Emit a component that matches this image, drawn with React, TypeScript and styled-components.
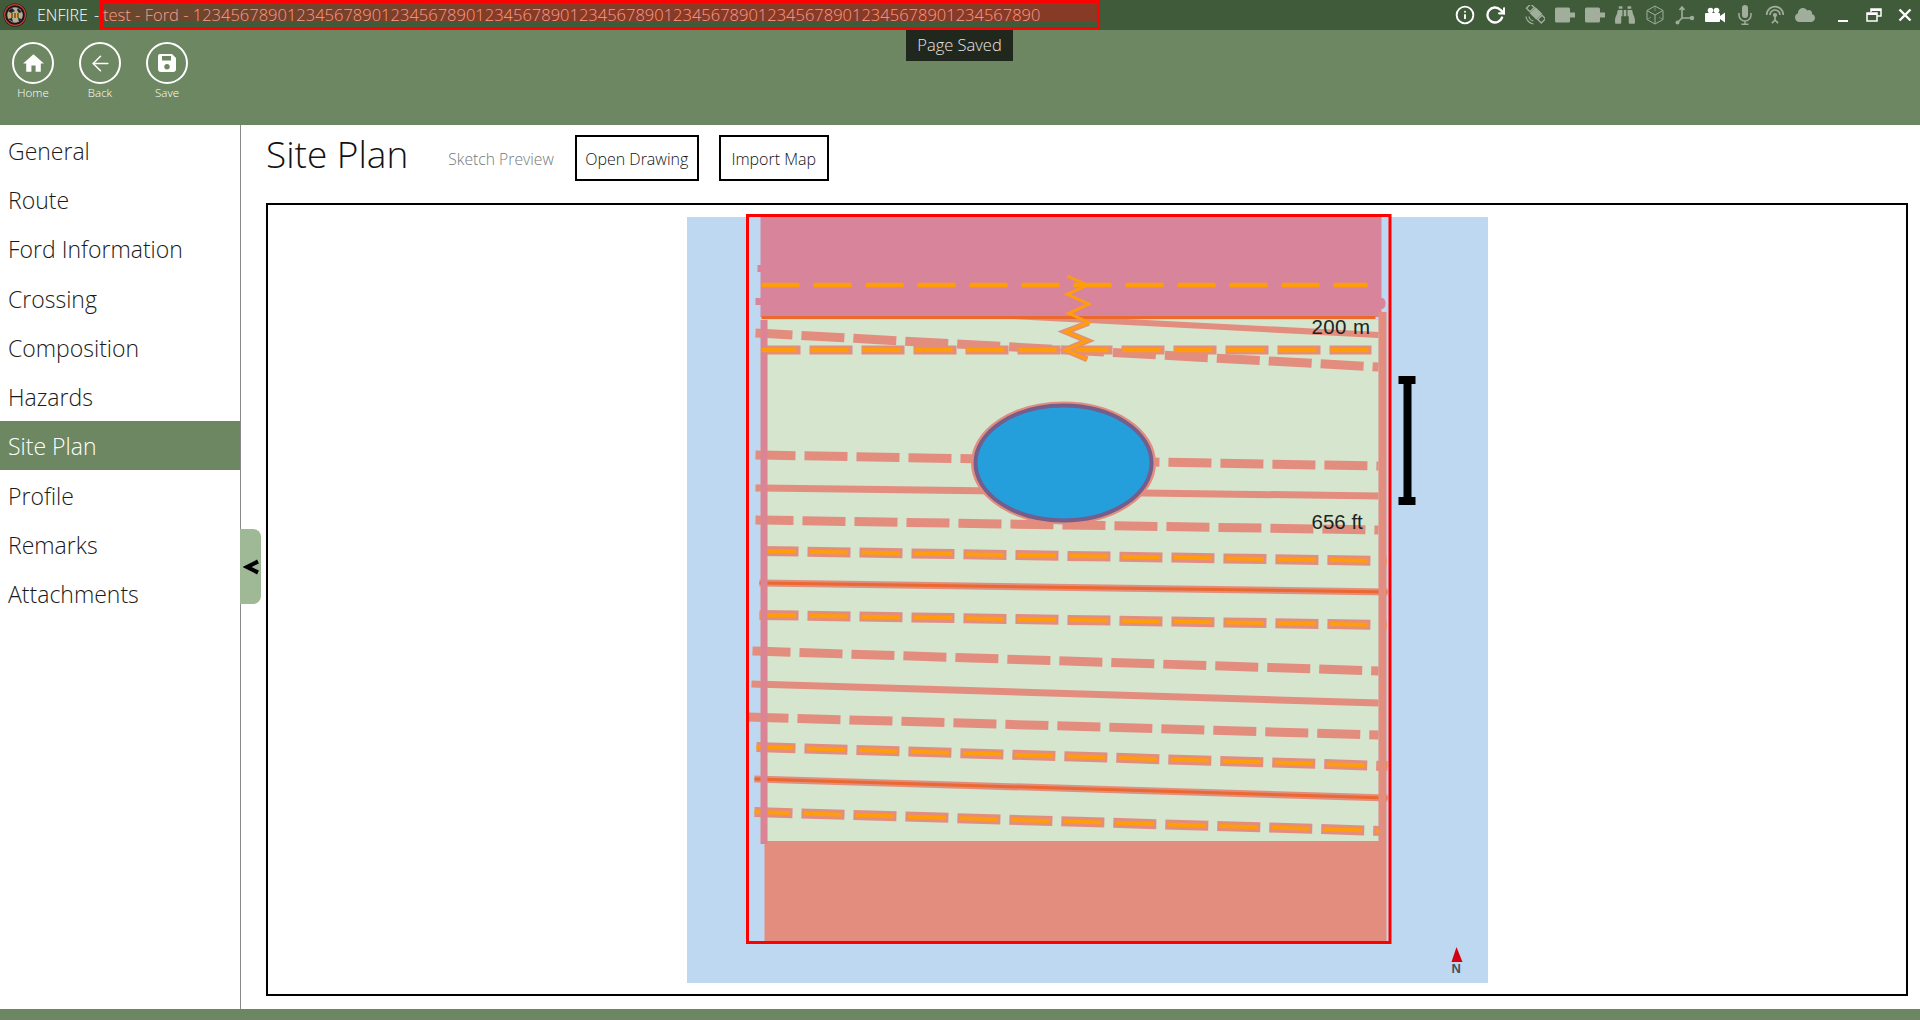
import styled, { createGlobalStyle } from "styled-components"
import { FiInfo, FiRotateCw, FiArrowLeft } from "react-icons/fi"
import { FaBinoculars, FaCloud } from "react-icons/fa"
import { MdOutlineSettingsInputAntenna, MdHome } from "react-icons/md"

const NAV = ["General", "Route", "Ford Information", "Crossing", "Composition", "Hazards", "Site Plan", "Profile", "Remarks", "Attachments"]

const GlobalStyle = createGlobalStyle`
  html, body { margin: 0; padding: 0; height: 100%; background: #fff; }
  body { font-family: "Open Sans", "Noto Sans", sans-serif; overflow: hidden; }
`

const Shell = styled.div`
  display: flex;
  flex-direction: column;
  width: 1920px;
  height: 1020px;
`

const TitleBar = styled.div`
  position: relative;
  display: flex;
  align-items: center;
  height: 30px;
  flex: none;
  background: #3f5b3a;
  color: #fff;
  font-size: 16px;
  font-weight: 300;
`

const LogoSlot = styled.span`
  display: flex;
  flex: none;
  width: 37px;
  padding-left: 3px;
  box-sizing: border-box;
`

const TitleName = styled.span`
  flex: none;
  width: 63px;
  white-space: pre;
  word-spacing: 2px;
`

const TitleDoc = styled.span`
  display: flex;
  align-items: center;
  flex: none;
  box-sizing: border-box;
  width: 1000px;
  height: 30px;
  padding-bottom: 2px;
  border: 3px solid #ff0000;
  background: linear-gradient(90deg, #65492f, #873b26 45%) top left / 100% 19px no-repeat;
  color: #ff9a8c;
  font-size: 16.5px;
  white-space: pre;
`

const IconGroup = styled.div`
  display: flex;
  align-items: center;
  margin-left: auto;
`

const Glyph = styled.span<{ $dim?: boolean; $gap?: number }>`
  display: flex;
  width: 20px;
  height: 20px;
  margin-right: ${(p) => p.$gap ?? 10}px;
  font-size: 20px;
  color: ${(p) => (p.$dim ? "#a0ae9b" : "#fff")};
`

const WinButton = styled.span`
  display: grid;
  place-items: center;
  width: 31px;
  height: 30px;
  color: #fff;
`

const Tip = styled.div`
  position: absolute;
  top: 30px;
  left: 906px;
  width: 107px;
  height: 31px;
  padding-bottom: 2px;
  box-sizing: border-box;
  display: grid;
  place-items: center;
  background: #20281e;
  color: #e6e6e6;
  font-size: 16.5px;
  font-weight: 300;
  z-index: 2;
`

const Toolbar = styled.div`
  display: flex;
  gap: 23px;
  height: 95px;
  flex: none;
  padding: 12px 0 0 11px;
  box-sizing: border-box;
  background: #6c8762;
`

const ToolButton = styled.div`
  display: flex;
  flex-direction: column;
  align-items: center;
  width: 44px;
  color: #fff;
  font-size: 11.5px;
  font-weight: 300;
`

const ToolRing = styled.div`
  display: grid;
  place-items: center;
  box-sizing: border-box;
  width: 42px;
  height: 42px;
  margin-bottom: 1px;
  border: 2.5px solid #fff;
  border-radius: 50%;
  font-size: 25px;
`

const Body = styled.div`
  display: flex;
  flex: 1;
  min-height: 0;
`

const Sidebar = styled.nav`
  position: relative;
  width: 241px;
  flex: none;
  box-sizing: border-box;
  border-right: 1px solid #8a8a8a;
`

const NavItem = styled.div<{ $active?: boolean }>`
  display: flex;
  align-items: center;
  box-sizing: border-box;
  height: 49.3px;
  padding: 2px 0 0 8px;
  font-size: 23px;
  font-weight: 300;
  color: ${(p) => (p.$active ? "#fff" : "#1a1a1a")};
  background: ${(p) => (p.$active ? "#6c8762" : "transparent")};
`

const Collapse = styled.div`
  position: absolute;
  top: 404px;
  left: 240px;
  width: 21px;
  height: 75px;
  display: grid;
  place-items: center;
  background: #9fb896;
  border-radius: 0 8px 8px 0;
  color: #000;
`

const Main = styled.main`
  flex: 1;
  min-width: 0;
  display: flex;
  flex-direction: column;
  padding: 9px 12px 13px 25px;
`

const Header = styled.div`
  display: flex;
  align-items: center;
  height: 47px;
  margin-bottom: 22px;
`

const Title = styled.h1`
  margin: 0 40px 7px 0;
  font-size: 37px;
  line-height: 1.2;
  font-weight: 300;
  color: #111;
`

const Hint = styled.span`
  margin: 2px 21px 0 0;
  font-size: 15.7px;
  font-weight: 300;
  color: #777;
`

const OutlineButton = styled.button<{ $width: number }>`
  box-sizing: border-box;
  width: ${(p) => p.$width}px;
  height: 46px;
  padding: 2px 0 0;
  margin-right: 20px;
  background: #fff;
  border: 2px solid #000;
  font-family: inherit;
  font-size: 16px;
  font-weight: 300;
  color: #111;
`

const Canvas = styled.div`
  flex: 1;
  min-height: 0;
  box-sizing: border-box;
  border: 2px solid #000;
  display: flex;
  justify-content: center;
  padding-top: 12px;
`

const Sketch = styled.svg`
  display: block;
  width: 801px;
  height: 766px;
  overflow: visible;
`

const Footer = styled.div`
  height: 11px;
  flex: none;
  background: #6c8762;
`

const SALMON = "#e38d7f"
const ORANGE = "#ff9d0a"

// phase: x where one of the salmon dashes starts, so the gaps land where the drawing has them
const Dash = ({ d, phase, ink }: { d: number[]; phase: number; ink?: boolean }) => (
  <>
    <line
      x1={d[0]} y1={d[1]} x2={d[2]} y2={d[3]}
      stroke={SALMON}
      strokeWidth={ink ? 10 : 9}
      strokeDasharray="43 9"
      strokeDashoffset={d[0] - phase}
    />
    {ink && (
      <line
        x1={d[0]} y1={d[1]} x2={d[2]} y2={d[3]}
        stroke={ORANGE}
        strokeWidth={4}
        strokeDasharray="38 14"
        strokeDashoffset={d[0] - phase - 2.5}
      />
    )}
  </>
)

const Solid = ({ d, ink }: { d: number[]; ink?: boolean }) => (
  <>
    <line x1={d[0]} y1={d[1]} x2={d[2]} y2={d[3]} stroke={SALMON} strokeWidth={7} />
    {ink && <line x1={d[0]} y1={d[1]} x2={d[2]} y2={d[3]} stroke="#e9692f" strokeWidth={3} />}
  </>
)

const ZIG = "1066.7,276 1086.7,285 1066.7,294.3 1088.3,304 1068.3,313.3 1088.3,322.7 1065,331.7 1086.7,340.7 1065,350 1086.7,359.3"
const ZIG_LOW = "1088.3,322.7 1065,331.7 1086.7,340.7 1065,350 1086.7,359.3"

const SitePlanSketch = () => (
  <Sketch viewBox="686.5 217 801 766">
    <rect x="686.5" y="217" width="801" height="766" fill="#bfd8f1" />
    <rect x="767" y="320" width="611" height="521" fill="#d5e5ce" />

    <line x1="761" y1="303" x2="1378" y2="335" stroke={SALMON} strokeWidth={6} />
    <rect x="760" y="217" width="621" height="100" fill="#d8849a" />
    <rect x="1378" y="298" width="7" height="11" rx="5" fill="#d8849a" />
    <rect x="757" y="265" width="4" height="7" fill="#d8849a" />
    <rect x="755" y="298" width="6" height="7" fill="#d8849a" />
    <rect x="764" y="841" width="622" height="100" fill={SALMON} />

    <Dash d={[755, 333, 1378, 367]} phase={749} />
    <Dash d={[761, 350, 1371, 350]} phase={757} />
    <Dash d={[755, 455, 1378, 466]} phase={752} />
    <Solid d={[755, 488, 1378, 496]} />
    <Dash d={[755, 520, 1378, 530]} phase={750} />
    <Dash d={[761, 551, 1386, 561]} phase={755} ink />
    <Solid d={[759, 583, 1387, 592]} ink />
    <Dash d={[759, 615, 1386, 625]} phase={755} ink />
    <Dash d={[752, 651, 1378, 671]} phase={747} />
    <Solid d={[751, 684, 1378, 703]} />
    <Dash d={[748, 717, 1378, 735]} phase={745} />
    <Dash d={[756, 747, 1387, 766]} phase={752} ink />
    <Solid d={[754, 779, 1387, 798]} ink />
    <Dash d={[754, 812, 1383, 831]} phase={749} ink />

    <rect x="760" y="320" width="7" height="524" fill="#db8594" />
    <rect x="1378" y="312" width="8" height="529" fill={SALMON} />

    <line x1="761" y1="285" x2="1367" y2="285" stroke={ORANGE} strokeWidth={4.5} strokeDasharray="38 14" />
    <line x1="761" y1="317.5" x2="1375" y2="317.5" stroke="#e9692f" strokeWidth={3} />
    <line x1="761" y1="350" x2="1371" y2="350" stroke={ORANGE} strokeWidth={4.5} strokeDasharray="38 14" strokeDashoffset={3} />

    <polyline points={ZIG_LOW} fill="none" stroke={SALMON} strokeWidth={6} />
    <polyline points={ZIG} fill="none" stroke={ORANGE} strokeWidth={3} />

    <ellipse cx="1063" cy="463" rx="90" ry="59" fill="#259fdc" stroke={SALMON} strokeWidth={5} />
    <ellipse cx="1063" cy="463" rx="88" ry="57.5" fill="none" stroke="#735e8c" strokeWidth={4} />

    <text x="1311" y="334" fontFamily="Liberation Sans" fontSize="20.5" letterSpacing=".4" fill="#222">200 m</text>
    <text x="1311" y="529" fontFamily="Liberation Sans" fontSize="20.5" fill="#222">656 ft</text>

    <path d="M1398 376h17v8h-4v113h4v8h-17v-8h5v-113h-5z" fill="#000" />
    <path d="M1456 947l6 15h-11z" fill="#d40010" />
    <text x="1451" y="973" fontFamily="Liberation Sans" fontWeight="700" fontSize="13" fill="#4a5058">N</text>

    <rect x="747" y="215.5" width="642.5" height="727" fill="none" stroke="#ff0000" strokeWidth={3} />
  </Sketch>
)

const Logo = () => (
  <svg width="24" height="24" viewBox="0 0 24 24">
    <circle cx="12" cy="12" r="11.5" fill="#1c1512" />
    <circle cx="12" cy="12" r="10.4" fill="none" stroke="#c8403a" strokeWidth="1.2" />
    <circle cx="12" cy="12" r="7.8" fill="#b5aea0" />
    <path d="M5 8l4-3 3 3-4 2zM15 5l4 4-3 1-2-3zM5 16l4-1 1 4zM15 15l4 1-3 3z" fill="#2a2320" />
    <path d="M7 11h10v3H7z" fill="#d9b441" />
    <path d="M9 10v5M12 10v5M15 10v5" stroke="#2a2320" strokeWidth="1" />
  </svg>
)

const SatelliteIcon = () => (
  <svg viewBox="0 0 20 20" width="20" height="20" fill="none" stroke="currentColor">
    <g transform="rotate(-45 11 8.5)" strokeWidth="1.4">
      <rect x="8" y="-2" width="6" height="5" />
      <rect x="7.5" y="4.5" width="7" height="8" fill="currentColor" />
      <rect x="8" y="14" width="6" height="5" />
    </g>
    <path d="M1 11.5c.3 3.8 3.5 7 7.5 7.5M4 11.5c.3 2.3 2 4 4.5 4.5" strokeWidth="1.2" />
  </svg>
)

const CamIcon = () => (
  <svg viewBox="0 0 20 20" width="20" height="20" fill="currentColor">
    <rect x="0" y="2.5" width="15" height="15" rx="1.5" />
    <rect x="15" y="7.5" width="5" height="5" />
  </svg>
)

const CubeIcon = () => (
  <svg viewBox="0 0 20 20" width="20" height="20" fill="none" stroke="currentColor" strokeWidth="1">
    <path d="M10 1l8 4.5v9L10 19l-8-4.5v-9zM2 5.5l8 4.5 8-4.5M10 10v9" />
    <path d="M10 1v5M2 14.5l4-2.5M18 14.5l-4-2.5" strokeWidth=".6" />
  </svg>
)

const AxisIcon = () => (
  <svg viewBox="0 0 20 20" width="20" height="20" fill="none" stroke="currentColor" strokeWidth="1.6">
    <path d="M7 13V2M4.5 5l2.500-3 2.500 3M7 13l-5 5M7 13h9" />
    <circle cx="2.5" cy="17.5" r="2" fill="currentColor" stroke="none" />
    <circle cx="17" cy="13" r="2.2" fill="currentColor" stroke="none" />
  </svg>
)

const MovieIcon = () => (
  <svg viewBox="0 0 20 20" width="20" height="20" fill="currentColor">
    <circle cx="5.5" cy="5.5" r="2.8" />
    <circle cx="11.5" cy="5.5" r="2.8" />
    <rect x="0" y="8" width="15" height="9" rx="1" />
    <path d="M15 11l5-3.500v10L15 14z" />
  </svg>
)

const MicIcon = () => (
  <svg viewBox="0 0 20 20" width="20" height="20" fill="none" stroke="currentColor" strokeWidth="1.5">
    <rect x="7" y="0" width="6" height="13" rx="3" fill="currentColor" stroke="none" />
    <path d="M4 8v2a6 6 0 0 0 12 0V8M10 16v3M6.5 19.3h7" />
  </svg>
)

const SaveIcon = () => (
  <svg viewBox="0 0 20 20" width="20" height="20" fill="currentColor">
    <path
      fillRule="evenodd"
      d="M3 1h12l4 4v11a3 3 0 0 1-3 3H4a3 3 0 0 1-3-3V3a2 2 0 0 1 2-2zm2 2v4.500h9V3zm5 8a2.700 2.700 0 1 0 0 5.400 2.700 2.700 0 0 0 0-5.400z"
    />
  </svg>
)

const MinimizeIcon = () => (
  <svg viewBox="0 0 14 20" width="14" height="20" fill="currentColor"><rect x="2" y="15" width="10" height="2" /></svg>
)

const RestoreIcon = () => (
  <svg viewBox="0 0 16 14" width="16" height="14" fill="none" stroke="currentColor" strokeWidth="1.5">
    <path d="M5 4V1h10v7h-4" />
    <rect x="1" y="5" width="10" height="8" />
    <path d="M1 6h10M5 2h10" strokeWidth="2" />
  </svg>
)

const CloseIcon = () => (
  <svg viewBox="0 0 14 14" width="14" height="14" fill="none" stroke="currentColor" strokeWidth="2.4"><path d="M1.500 1.500l11 11M12.500 1.500l-11 11" /></svg>
)

const ChevronIcon = () => (
  <svg viewBox="0 0 16 16" width="16" height="16" fill="none" stroke="currentColor" strokeWidth="4.2"><path d="M15 2.500L4 8l11 5.500" /></svg>
)

export default function App() {
  return (
    <Shell>
      <GlobalStyle />
      <TitleBar>
        <LogoSlot><Logo /></LogoSlot>
        <TitleName>ENFIRE - </TitleName>
        <TitleDoc>test - Ford - 123456789012345678901234567890123456789012345678901234567890123456789012345678901234567890</TitleDoc>
        <IconGroup>
          <Glyph><FiInfo strokeWidth={2.3} /></Glyph>
          <Glyph $gap={20}><FiRotateCw strokeWidth={2.8} /></Glyph>
          <Glyph $dim><SatelliteIcon /></Glyph>
          <Glyph $dim><CamIcon /></Glyph>
          <Glyph $dim><CamIcon /></Glyph>
          <Glyph $dim><FaBinoculars /></Glyph>
          <Glyph $dim><CubeIcon /></Glyph>
          <Glyph $dim><AxisIcon /></Glyph>
          <Glyph><MovieIcon /></Glyph>
          <Glyph $dim><MicIcon /></Glyph>
          <Glyph $dim><MdOutlineSettingsInputAntenna /></Glyph>
          <Glyph $dim $gap={12}><FaCloud /></Glyph>
          <WinButton><MinimizeIcon /></WinButton>
          <WinButton><RestoreIcon /></WinButton>
          <WinButton><CloseIcon /></WinButton>
        </IconGroup>
        <Tip>Page Saved</Tip>
      </TitleBar>
      <Toolbar>
        <ToolButton><ToolRing><MdHome /></ToolRing>Home</ToolButton>
        <ToolButton><ToolRing><FiArrowLeft strokeWidth={1.5} /></ToolRing>Back</ToolButton>
        <ToolButton><ToolRing><SaveIcon /></ToolRing>Save</ToolButton>
      </Toolbar>
      <Body>
        <Sidebar>
          {NAV.map((n) => (
            <NavItem key={n} $active={n === "Site Plan"}>{n}</NavItem>
          ))}
          <Collapse><ChevronIcon /></Collapse>
        </Sidebar>
        <Main>
          <Header>
            <Title>Site Plan</Title>
            <Hint>Sketch Preview</Hint>
            <OutlineButton $width={124}>Open Drawing</OutlineButton>
            <OutlineButton $width={110}>Import Map</OutlineButton>
          </Header>
          <Canvas>
            <SitePlanSketch />
          </Canvas>
        </Main>
      </Body>
      <Footer />
    </Shell>
  )
}
